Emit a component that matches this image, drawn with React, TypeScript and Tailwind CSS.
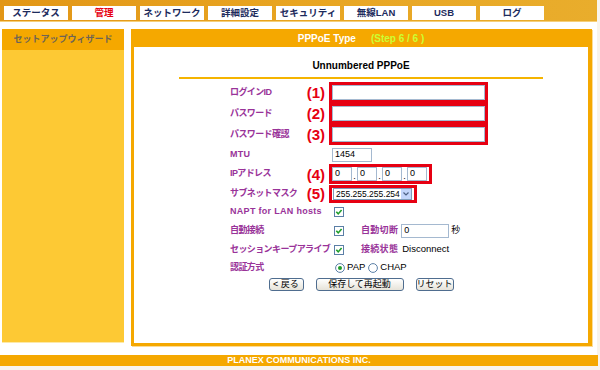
import type { ReactNode } from 'react'

const tabs = ['ステータス', '管理', 'ネットワーク', '詳細設定', 'セキュリティ', '無線LAN', 'USB', 'ログ']

function CheckBox() {
  return (
    <svg width="10" height="10" viewBox="0 0 10 10" className="shrink-0">
      <rect x="0.5" y="0.5" width="9" height="9" fill="#fff" stroke="#5b7fa6" />
      <path d="M2.3 4.8 L4.2 6.9 L7.6 2.9" stroke="#1f9e2a" strokeWidth="1.6" fill="none" />
    </svg>
  )
}

function Radio({ on }: { on?: boolean }) {
  return (
    <svg width="10" height="10" viewBox="0 0 10 10" className="shrink-0">
      <circle cx="5" cy="5" r="4.4" fill="#fff" stroke="#5b7fa6" />
      {on && <circle cx="5" cy="5" r="2" fill="#1f9e2a" />}
    </svg>
  )
}

function Row({ label, marker, latin, className, children }: { label?: string; marker?: string; latin?: boolean; className: string; children?: ReactNode }) {
  return (
    <div className={`flex items-center ${className}`}>
      <div className="w-[99px] h-full flex items-center pr-[4px] shrink-0">
        {label && (
          <span className={`text-[9px] font-bold text-[#993399] whitespace-nowrap ${latin ? 'tracking-[0.3px]' : 'tracking-[-0.6px]'}`}>
            {label}
          </span>
        )}
        {marker && <span className="ml-auto text-[15px] leading-none font-bold text-[#e60012]">{marker}</span>}
      </div>
      {children}
    </div>
  )
}

function Field({ className, value }: { className: string; value?: string }) {
  return (
    <div className={`border border-[#a5b9d0] bg-white flex items-center pl-[2px] text-[9px] text-black ${className}`}>
      {value}
    </div>
  )
}

function RedBox({ children }: { children: ReactNode }) {
  return <div className="w-[159px] h-[21px] border-[3px] border-[#e60012]">{children}</div>
}

function Btn({ children, w }: { children: ReactNode; w: string }) {
  return (
    <div className={`${w} h-[13px] rounded-[3px] border border-[#4f6d8f] bg-gradient-to-b from-white to-[#e6e3d8] flex items-center justify-center text-[9px] text-black`}>
      {children}
    </div>
  )
}

export default function App() {
  return (
    <div className="w-[600px] h-[370px] bg-[#f8f4ec] flex overflow-hidden font-['Liberation_Sans','Noto_Sans_CJK_JP',sans-serif]">
      <div className="w-[597px] h-[366px] bg-white flex flex-col shrink-0">
        {/* top menu */}
        <div className="h-[22px] bg-gradient-to-r from-[#e29616] via-[#e8a522] to-[#e9ad2c] border-b border-[#f6cf78] flex gap-[4px] pl-[4px] pt-[6px]">
          {tabs.map((t) => (
            <div
              key={t}
              className={`w-[64px] h-[14px] bg-white flex items-center justify-center text-[9.5px] font-bold ${t === '管理' ? 'text-[#e60012]' : 'text-[#1d2b5c]'}`}
            >
              {t}
            </div>
          ))}
        </div>

        <div className="flex mt-[7px]">
          {/* sidebar */}
          <div className="ml-[2px] w-[122px] h-[313px] bg-[#fdc934] flex flex-col shadow-[0_1px_0_#fde9a8]">
            <div className="h-[21px] bg-[#f5a800] flex items-center justify-center text-[9px] font-bold text-[#6e6455]">
              セットアップウィザード
            </div>
          </div>

          {/* main panel */}
          <div className="ml-[7px] w-[461px] h-[317px] bg-[#f5a800] flex flex-col pl-[3px] pr-[4px] pb-[3px] shadow-[1px_1px_0_#fcdc95]">
            <div className="h-[18px] flex items-center justify-center text-[10px] font-bold">
              <span className="text-white">PPPoE Type</span>
              <span className="ml-[15px] text-[#ccff33]">(Step 6 / 6 )</span>
            </div>
            <div className="flex-1 bg-white flex flex-col">
              <div className="pt-[12px] text-[10px] leading-[14px] font-bold text-center text-black">Unnumbered PPPoE</div>
              <div className="mt-[4px] mx-auto w-[364px] h-[2px] bg-[#f5b400]" />

              <div className="mt-[3px] pl-[96px] flex flex-col">
                <Row label="ログインID" marker="(1)" className="h-[21px]">
                  <RedBox><Field className="w-full h-full" /></RedBox>
                </Row>
                <Row label="パスワード" marker="(2)" className="h-[21px]">
                  <RedBox><Field className="w-full h-full" /></RedBox>
                </Row>
                <Row label="パスワード確認" marker="(3)" className="h-[21px]">
                  <RedBox><Field className="w-full h-full" /></RedBox>
                </Row>
                <Row label="MTU" latin className="h-[19px]">
                  <Field className="ml-[3px] w-[40px] h-[14px]" value="1454" />
                </Row>
                <Row label="IPアドレス" marker="(4)" className="h-[20px]">
                  <div className="w-[103px] h-[20px] border-[3px] border-[#e60012] flex items-center">
                    {[0, 1, 2, 3].map((i) => (
                      <div key={i} className="flex items-end">
                        {i > 0 && <span className="w-[5px] text-center text-[9px] leading-[10px] text-black">.</span>}
                        <Field className="w-[20px] h-[14px]" value="0" />
                      </div>
                    ))}
                  </div>
                </Row>
                <Row label="サブネットマスク" marker="(5)" className="h-[19px]">
                  <div className="w-[88px] h-[18px] mt-[1px] border-[3px] border-[#e60012] flex items-center pl-[1px]">
                    <div className="w-[79px] h-[12px] border border-[#7f9db9] bg-white flex items-center">
                      <span className="flex-1 pl-[2px] text-[8.5px] leading-none text-black whitespace-nowrap overflow-hidden">255.255.255.254</span>
                      <div className="w-[10px] h-full bg-[#c3d5fa] flex items-center justify-center shrink-0">
                        <svg width="6" height="4" viewBox="0 0 6 4">
                          <path d="M0.5 0.5 L3 3 L5.5 0.5" stroke="#4d6185" strokeWidth="1.2" fill="none" />
                        </svg>
                      </div>
                    </div>
                  </div>
                </Row>
                <Row label="NAPT for LAN hosts" latin className="h-[18px]">
                  <div className="ml-[5px]"><CheckBox /></div>
                </Row>
                <Row label="自動接続" className="h-[19px]">
                  <div className="ml-[5px]"><CheckBox /></div>
                  <span className="ml-[17px] text-[9px] font-bold text-[#993399] tracking-[0.3px]">自動切断</span>
                  <Field className="ml-[3px] w-[48px] h-[14px]" value="0" />
                  <span className="ml-[2px] text-[9px] text-black">秒</span>
                </Row>
                <Row label="セッションキープアライブ" className="h-[19px]">
                  <div className="ml-[5px]"><CheckBox /></div>
                  <span className="ml-[17px] text-[9px] font-bold text-[#993399] tracking-[0.3px]">接続状態</span>
                  <span className="ml-[4px] text-[9.5px] text-black">Disconnect</span>
                </Row>
                <Row label="認証方式" className="h-[17px]">
                  <div className="ml-[6px] flex items-center text-[9.5px] text-black">
                    <Radio on />
                    <span className="ml-[2px]">PAP</span>
                    <span className="ml-[3px]"><Radio /></span>
                    <span className="ml-[2px]">CHAP</span>
                  </div>
                </Row>
              </div>

              <div className="mt-[2px] flex justify-center gap-[12px]">
                <Btn w="w-[35px]">&lt; 戻る</Btn>
                <Btn w="w-[88px]">保存して再起動</Btn>
                <Btn w="w-[38px]">リセット</Btn>
              </div>
            </div>
          </div>
        </div>

        <div className="mt-[9px] w-[598px] h-[11px] bg-[#f5a800] flex items-center justify-center text-[9px] leading-none font-bold text-white">
          PLANEX COMMUNICATIONS INC.
        </div>
      </div>
    </div>
  )
}
